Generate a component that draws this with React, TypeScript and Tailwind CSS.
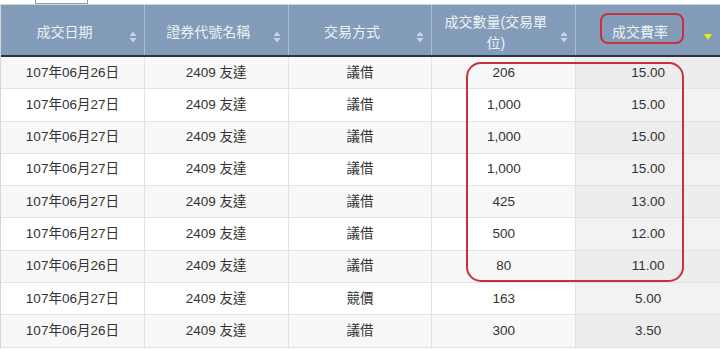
const rows = [
  { date: "107年06月26日", code: "2409 友達", type: "議借", qty: "206", rate: "15.00" },
  { date: "107年06月27日", code: "2409 友達", type: "議借", qty: "1,000", rate: "15.00" },
  { date: "107年06月27日", code: "2409 友達", type: "議借", qty: "1,000", rate: "15.00" },
  { date: "107年06月27日", code: "2409 友達", type: "議借", qty: "1,000", rate: "15.00" },
  { date: "107年06月27日", code: "2409 友達", type: "議借", qty: "425", rate: "13.00" },
  { date: "107年06月27日", code: "2409 友達", type: "議借", qty: "500", rate: "12.00" },
  { date: "107年06月26日", code: "2409 友達", type: "議借", qty: "80", rate: "11.00" },
  { date: "107年06月27日", code: "2409 友達", type: "競價", qty: "163", rate: "5.00" },
  { date: "107年06月26日", code: "2409 友達", type: "議借", qty: "300", rate: "3.50" },
];

function SortIcon() {
  return (
    <svg width="8" height="12" viewBox="0 0 8 12" className="absolute right-[7px] top-[26px]">
      <path d="M4 0.5 L7.5 5 L0.5 5 Z" fill="#c9d4e0" />
      <path d="M4 11.5 L7.5 7 L0.5 7 Z" fill="#c9d4e0" />
    </svg>
  );
}

function SortedIcon() {
  return (
    <svg width="8" height="6" viewBox="0 0 8 6" className="absolute right-[8px] top-[29px]">
      <path d="M0 0 L8 0 L4 6 Z" fill="#f2e51a" />
    </svg>
  );
}

function HeadCell({ children, sorted, last }: { children: React.ReactNode; sorted?: boolean; last?: boolean }) {
  return (
    <div
      className={`relative flex items-center justify-center pt-[5px] pr-[16px] text-center text-[14px] leading-[21px] text-[#eef2f7] ${
        last ? "" : "border-r border-[#aabdd2]"
      }`}
    >
      <span>{children}</span>
      {sorted ? <SortedIcon /> : <SortIcon />}
    </div>
  );
}

export default function App() {
  return (
    <div
      className="relative w-[720px] h-[349px] overflow-hidden bg-white"
      style={{ fontFamily: '"Liberation Sans", "Noto Sans CJK TC", sans-serif' }}
    >
      <div className="h-[4px] flex">
        <div className="ml-[35px] w-[53px] h-[4px] border border-t-0 border-[#9a9a9a] bg-white" />
      </div>
      <div className="border-t border-[#2e3440] border-l border-[#d5d5d5]">
        <div className="grid grid-cols-5 h-[52px] bg-[#829cb9] border-b-2 border-[#2f3238]">
          <HeadCell>成交日期</HeadCell>
          <HeadCell>證券代號名稱</HeadCell>
          <HeadCell>交易方式</HeadCell>
          <HeadCell>
            成交數量(交易單
            <br />
            位)
          </HeadCell>
          <HeadCell sorted last>
            成交費率
          </HeadCell>
        </div>
        {rows.map((r, i) => {
          const odd = i % 2 === 0;
          const base = odd ? "bg-[#f8f8f8]" : "bg-white";
          const sortedBg = odd ? "bg-[#ededed]" : "bg-[#f2f2f2]";
          return (
            <div
              key={i}
              className="grid grid-cols-5 h-[32.3px] border-b border-[#e2e2e2] text-[13.5px] text-[#333]"
            >
              <div className={`flex items-center justify-center border-r border-[#e2e2e2] ${base}`}>{r.date}</div>
              <div className={`flex items-center justify-center border-r border-[#e2e2e2] ${base}`}>{r.code}</div>
              <div className={`flex items-center justify-center border-r border-[#e2e2e2] ${base}`}>{r.type}</div>
              <div className={`flex items-center justify-center border-r border-[#e2e2e2] ${base}`}>{r.qty}</div>
              <div className={`flex items-center justify-center ${sortedBg}`}>{r.rate}</div>
            </div>
          );
        })}
      </div>

      <div className="absolute left-[600px] top-[13px] w-[84px] h-[31px] rounded-[8px] border-2 border-[#c9303d]" />
      <div className="absolute left-[466px] top-[62px] w-[218px] h-[220px] rounded-[15px] border-2 border-[#c9303d]" />
    </div>
  );
}
